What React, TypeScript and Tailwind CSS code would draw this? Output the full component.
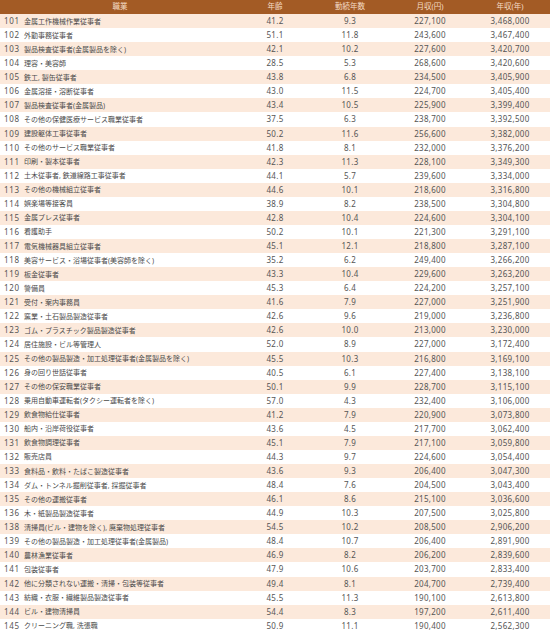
const rows: [number, string, string, string, string, string][] = [
  [101, '金属工作機械作業従事者', '41.2', '9.3', '227,100', '3,468,000'],
  [102, '外勤事務従事者', '51.1', '11.8', '243,600', '3,467,400'],
  [103, '製品検査従事者(金属製品を除く)', '42.1', '10.2', '227,600', '3,420,700'],
  [104, '理容・美容師', '28.5', '5.3', '268,600', '3,420,600'],
  [105, '鉄工, 製缶従事者', '43.8', '6.8', '234,500', '3,405,900'],
  [106, '金属溶接・溶断従事者', '43.0', '11.5', '224,700', '3,405,400'],
  [107, '製品検査従事者(金属製品)', '43.4', '10.5', '225,900', '3,399,400'],
  [108, 'その他の保健医療サービス職業従事者', '37.5', '6.3', '238,700', '3,392,500'],
  [109, '建設躯体工事従事者', '50.2', '11.6', '256,600', '3,382,000'],
  [110, 'その他のサービス職業従事者', '41.8', '8.1', '232,000', '3,376,200'],
  [111, '印刷・製本従事者', '42.3', '11.3', '228,100', '3,349,300'],
  [112, '土木従事者, 鉄道線路工事従事者', '44.1', '5.7', '239,600', '3,334,000'],
  [113, 'その他の機械組立従事者', '44.6', '10.1', '218,600', '3,316,800'],
  [114, '娯楽場等接客員', '38.9', '8.2', '238,500', '3,304,800'],
  [115, '金属プレス従事者', '42.8', '10.4', '224,600', '3,304,100'],
  [116, '看護助手', '50.2', '10.1', '221,300', '3,291,100'],
  [117, '電気機械器具組立従事者', '45.1', '12.1', '218,800', '3,287,100'],
  [118, '美容サービス・浴場従事者(美容師を除く)', '35.2', '6.2', '249,400', '3,266,200'],
  [119, '板金従事者', '43.3', '10.4', '229,600', '3,263,200'],
  [120, '警備員', '45.3', '6.4', '224,200', '3,257,100'],
  [121, '受付・案内事務員', '41.6', '7.9', '227,000', '3,251,900'],
  [122, '窯業・土石製品製造従事者', '42.6', '9.6', '219,000', '3,236,800'],
  [123, 'ゴム・プラスチック製品製造従事者', '42.6', '10.0', '213,000', '3,230,000'],
  [124, '居住施設・ビル等管理人', '52.0', '8.9', '227,000', '3,172,400'],
  [125, 'その他の製品製造・加工処理従事者(金属製品を除く)', '45.5', '10.3', '216,800', '3,169,100'],
  [126, '身の回り世話従事者', '40.5', '6.1', '227,400', '3,138,100'],
  [127, 'その他の保安職業従事者', '50.1', '9.9', '228,700', '3,115,100'],
  [128, '乗用自動車運転者(タクシー運転者を除く)', '57.0', '4.3', '232,400', '3,106,000'],
  [129, '飲食物給仕従事者', '41.2', '7.9', '220,900', '3,073,800'],
  [130, '船内・沿岸荷役従事者', '43.6', '4.5', '217,700', '3,062,400'],
  [131, '飲食物調理従事者', '45.1', '7.9', '217,100', '3,059,800'],
  [132, '販売店員', '44.3', '9.7', '224,600', '3,054,400'],
  [133, '食料品・飲料・たばこ製造従事者', '43.6', '9.3', '206,400', '3,047,300'],
  [134, 'ダム・トンネル掘削従事者, 採掘従事者', '48.4', '7.6', '204,500', '3,043,400'],
  [135, 'その他の運搬従事者', '46.1', '8.6', '215,100', '3,036,600'],
  [136, '木・紙製品製造従事者', '44.9', '10.3', '207,500', '3,025,800'],
  [138, '清掃員(ビル・建物を除く), 廃棄物処理従事者', '54.5', '10.2', '208,500', '2,906,200'],
  [139, 'その他の製品製造・加工処理従事者(金属製品)', '48.4', '10.7', '206,400', '2,891,900'],
  [140, '農林漁業従事者', '46.9', '8.2', '206,200', '2,839,600'],
  [141, '包装従事者', '47.9', '10.6', '203,700', '2,833,400'],
  [142, '他に分類されない運搬・清掃・包装等従事者', '49.4', '8.1', '204,700', '2,739,400'],
  [143, '紡織・衣服・繊維製品製造従事者', '45.5', '11.3', '190,100', '2,613,800'],
  [144, 'ビル・建物清掃員', '54.4', '8.3', '197,200', '2,611,400'],
  [145, 'クリーニング職, 洗張職', '50.9', '11.1', '190,400', '2,562,300'],
]

const cols = 'grid grid-cols-[240px_70px_80px_80px_80px]'

export default function App() {
  return (
    <div className="w-[550px] h-[635px] bg-white overflow-hidden text-[8px] text-[#555] font-['Noto_Sans','Noto_Sans_CJK_JP',sans-serif]">
      <div className={`${cols} h-[14px] items-center bg-[#a35b25] text-[#f5dcc6] text-[7.5px]`}>
        <div className="text-center">職業</div>
        <div className="text-center">年齢</div>
        <div className="text-center">勤続年数</div>
        <div className="text-center">月収(円)</div>
        <div className="text-center">年収(年)</div>
      </div>
      {rows.map(([no, name, age, years, monthly, yearly], i) => (
        <div
          key={no}
          className={`${cols} h-[14.07px] items-center leading-none tracking-[0.3px] ${i % 2 === 0 ? 'bg-[#fce9db]' : 'bg-white'}`}
        >
          <div className="flex items-center whitespace-nowrap">
            <span className="w-[24px] pl-[4px] text-[8px] tracking-[0.7px]">{no}</span>
            <span className="text-[7px] tracking-normal text-[#4a4a4a]">{name}</span>
          </div>
          <div className="text-center">{age}</div>
          <div className="text-center">{years}</div>
          <div className="text-center">{monthly}</div>
          <div className="text-center">{yearly}</div>
        </div>
      ))}
    </div>
  )
}
